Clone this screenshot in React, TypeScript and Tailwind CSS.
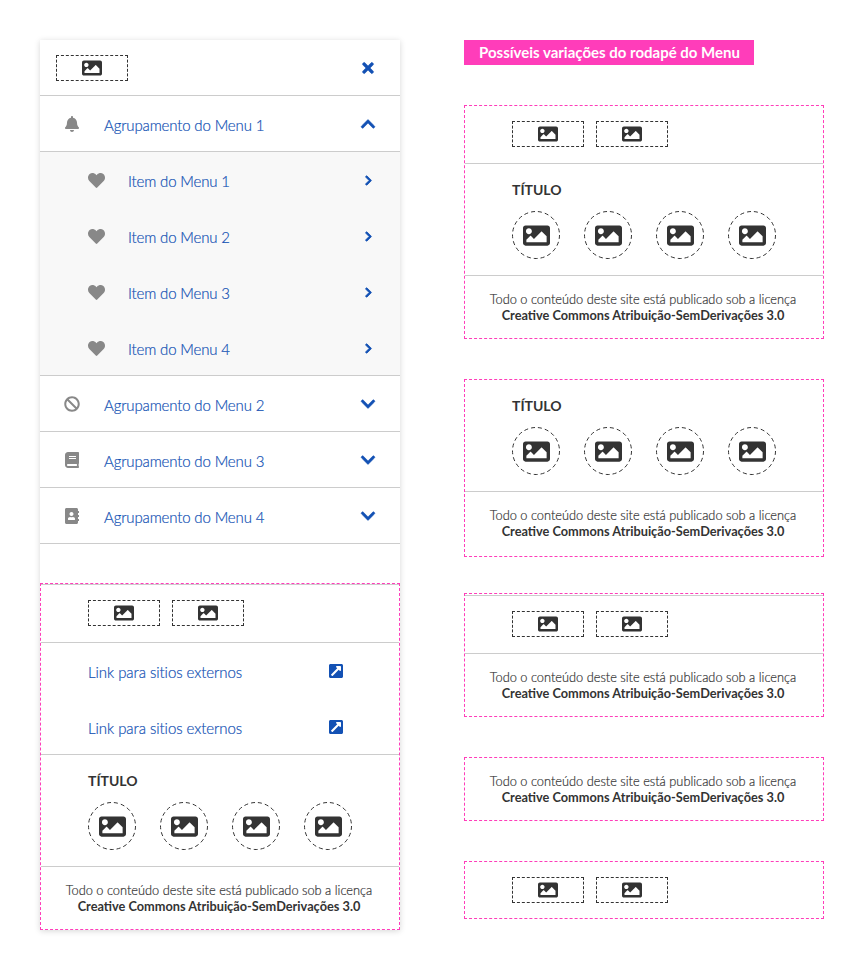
import { ReactNode } from 'react';
import {
  FaAddressBook,
  FaBan,
  FaBell,
  FaBook,
  FaChevronDown,
  FaChevronRight,
  FaChevronUp,
  FaExternalLinkSquareAlt,
  FaHeart,
  FaImage,
  FaTimes,
} from 'react-icons/fa';

const font = "font-['Lato','Liberation_Sans',sans-serif]";
const blueText = 'font-light text-[15px] text-[#1351b4] [-webkit-text-stroke:0.2px_#1351b4]';

function Logo() {
  return (
    <div className="flex h-[26px] w-[72px] items-center justify-center border border-dashed border-[#333]">
      <FaImage size={20} className="text-[#333]" />
    </div>
  );
}

function Logos({ className = 'border-b border-[#ccc] pb-4' }: { className?: string }) {
  return (
    <div className={`flex gap-3 pl-[47px] pt-[15px] ${className}`}>
      <Logo />
      <Logo />
    </div>
  );
}

function Social() {
  return (
    <div className="border-b border-[#ccc] pb-4 pl-[47px] pt-[18px]">
      <div className="text-sm font-bold leading-4 text-[#333]">TÍTULO</div>
      <div className="mt-[13px] flex gap-6">
        {[1, 2, 3, 4].map((n) => (
          <div key={n} className="relative flex h-12 w-12 items-center justify-center">
            <svg width="48" height="48" viewBox="0 0 48 48" fill="none" className="absolute inset-0">
              <circle cx="24" cy="24" r="23.5" stroke="#333" strokeDasharray="4 3" />
            </svg>
            <FaImage size={27} className="text-[#333]" />
          </div>
        ))}
      </div>
    </div>
  );
}

function Licence({ className = 'pb-[15px]' }: { className?: string }) {
  return (
    <div className={`pr-0.5 pt-[15px] text-center leading-4 text-[#333] ${className}`}>
      <div className="text-[12.8px] font-light [-webkit-text-stroke:0.2px_#333]">
        Todo o conteúdo deste site está publicado sob a licença
      </div>
      <div className="text-[12.75px] font-bold">Creative Commons Atribuição-SemDerivações 3.0</div>
    </div>
  );
}

function Box({ children, className = '' }: { children: ReactNode; className?: string }) {
  return <div className={`border border-dashed border-[#ff3dba] ${className}`}>{children}</div>;
}

function Group({ icon, label, chevron }: { icon: ReactNode; label: string; chevron: ReactNode }) {
  return (
    <div className="flex h-14 items-center border-b border-[#ccc] pl-6 pr-6">
      <span className="flex w-4 justify-center text-[#888]">{icon}</span>
      <span className={`ml-6 flex-1 pt-1 tracking-[-0.15px] ${blueText}`}>{label}</span>
      <span className="flex w-4 justify-center text-[#1351b4]">{chevron}</span>
    </div>
  );
}

function Item({ label }: { label: string }) {
  return (
    <div className="flex h-14 items-center pl-12 pr-6">
      <FaHeart size={17} className="text-[#888]" />
      <span className={`ml-[23px] flex-1 pt-0.5 tracking-[-0.15px] ${blueText}`}>{label}</span>
      <span className="flex w-4 justify-center text-[#1351b4]">
        <FaChevronRight size={11} stroke="currentColor" strokeWidth={40} />
      </span>
    </div>
  );
}

function ExternalLink() {
  return (
    <div className="flex h-14 items-center pl-[47px] pr-[55px]">
      <span className={`flex-1 pt-0.5 tracking-[-0.05px] ${blueText}`}>Link para sitios externos</span>
      <FaExternalLinkSquareAlt size={16} className="text-[#1351b4]" />
    </div>
  );
}

export default function App() {
  return (
    <div className={`flex h-[970px] w-[864px] gap-16 bg-white pl-10 pt-10 ${font}`}>
      <div className="h-[890px] w-[360px] bg-white shadow-[0_1px_6px_rgba(0,0,0,0.16)]">
        <div className="flex h-14 items-center justify-between border-b border-[#ccc] pl-4 pr-6">
          <Logo />
          <FaTimes size={16} stroke="currentColor" strokeWidth={20} className="text-[#1351b4]" />
        </div>
        <Group
          icon={<FaBell size={16} />}
          label="Agrupamento do Menu 1"
          chevron={<FaChevronUp size={16} stroke="currentColor" strokeWidth={20} />}
        />
        <div className="h-56 border-b border-[#ccc] bg-[#f8f8f8]">
          <Item label="Item do Menu 1" />
          <Item label="Item do Menu 2" />
          <Item label="Item do Menu 3" />
          <Item label="Item do Menu 4" />
        </div>
        <Group
          icon={<FaBan size={16} />}
          label="Agrupamento do Menu 2"
          chevron={<FaChevronDown size={16} stroke="currentColor" strokeWidth={20} />}
        />
        <Group
          icon={<FaBook size={16} />}
          label="Agrupamento do Menu 3"
          chevron={<FaChevronDown size={16} stroke="currentColor" strokeWidth={20} />}
        />
        <Group
          icon={<FaAddressBook size={16} />}
          label="Agrupamento do Menu 4"
          chevron={<FaChevronDown size={16} stroke="currentColor" strokeWidth={20} />}
        />
        <Box className="mt-[39px]">
          <div className="border-t border-[#ccc]">
            <Logos />
          </div>
          <div className="h-28 border-b border-[#ccc]">
            <ExternalLink />
            <ExternalLink />
          </div>
          <Social />
          <Licence />
        </Box>
      </div>

      <div className="w-[360px]">
        <div className="flex h-[25px] w-[290px] items-center bg-[#ff3dba] pl-[15px] text-[15px] font-bold text-white">
          Possíveis variações do rodapé do Menu
        </div>
        <Box className="mt-10">
          <Logos />
          <Social />
          <Licence />
        </Box>
        <Box className="mt-10">
          <Social />
          <Licence className="pb-[17px]" />
        </Box>
        <Box className="mt-9">
          <div className="pt-px">
            <div className="border-t border-[#ccc]">
              <Logos />
            </div>
          </div>
          <Licence />
        </Box>
        <Box className="mt-10">
          <Licence />
        </Box>
        <Box className="mt-10">
          <Logos className="pb-[15px]" />
        </Box>
      </div>
    </div>
  );
}
